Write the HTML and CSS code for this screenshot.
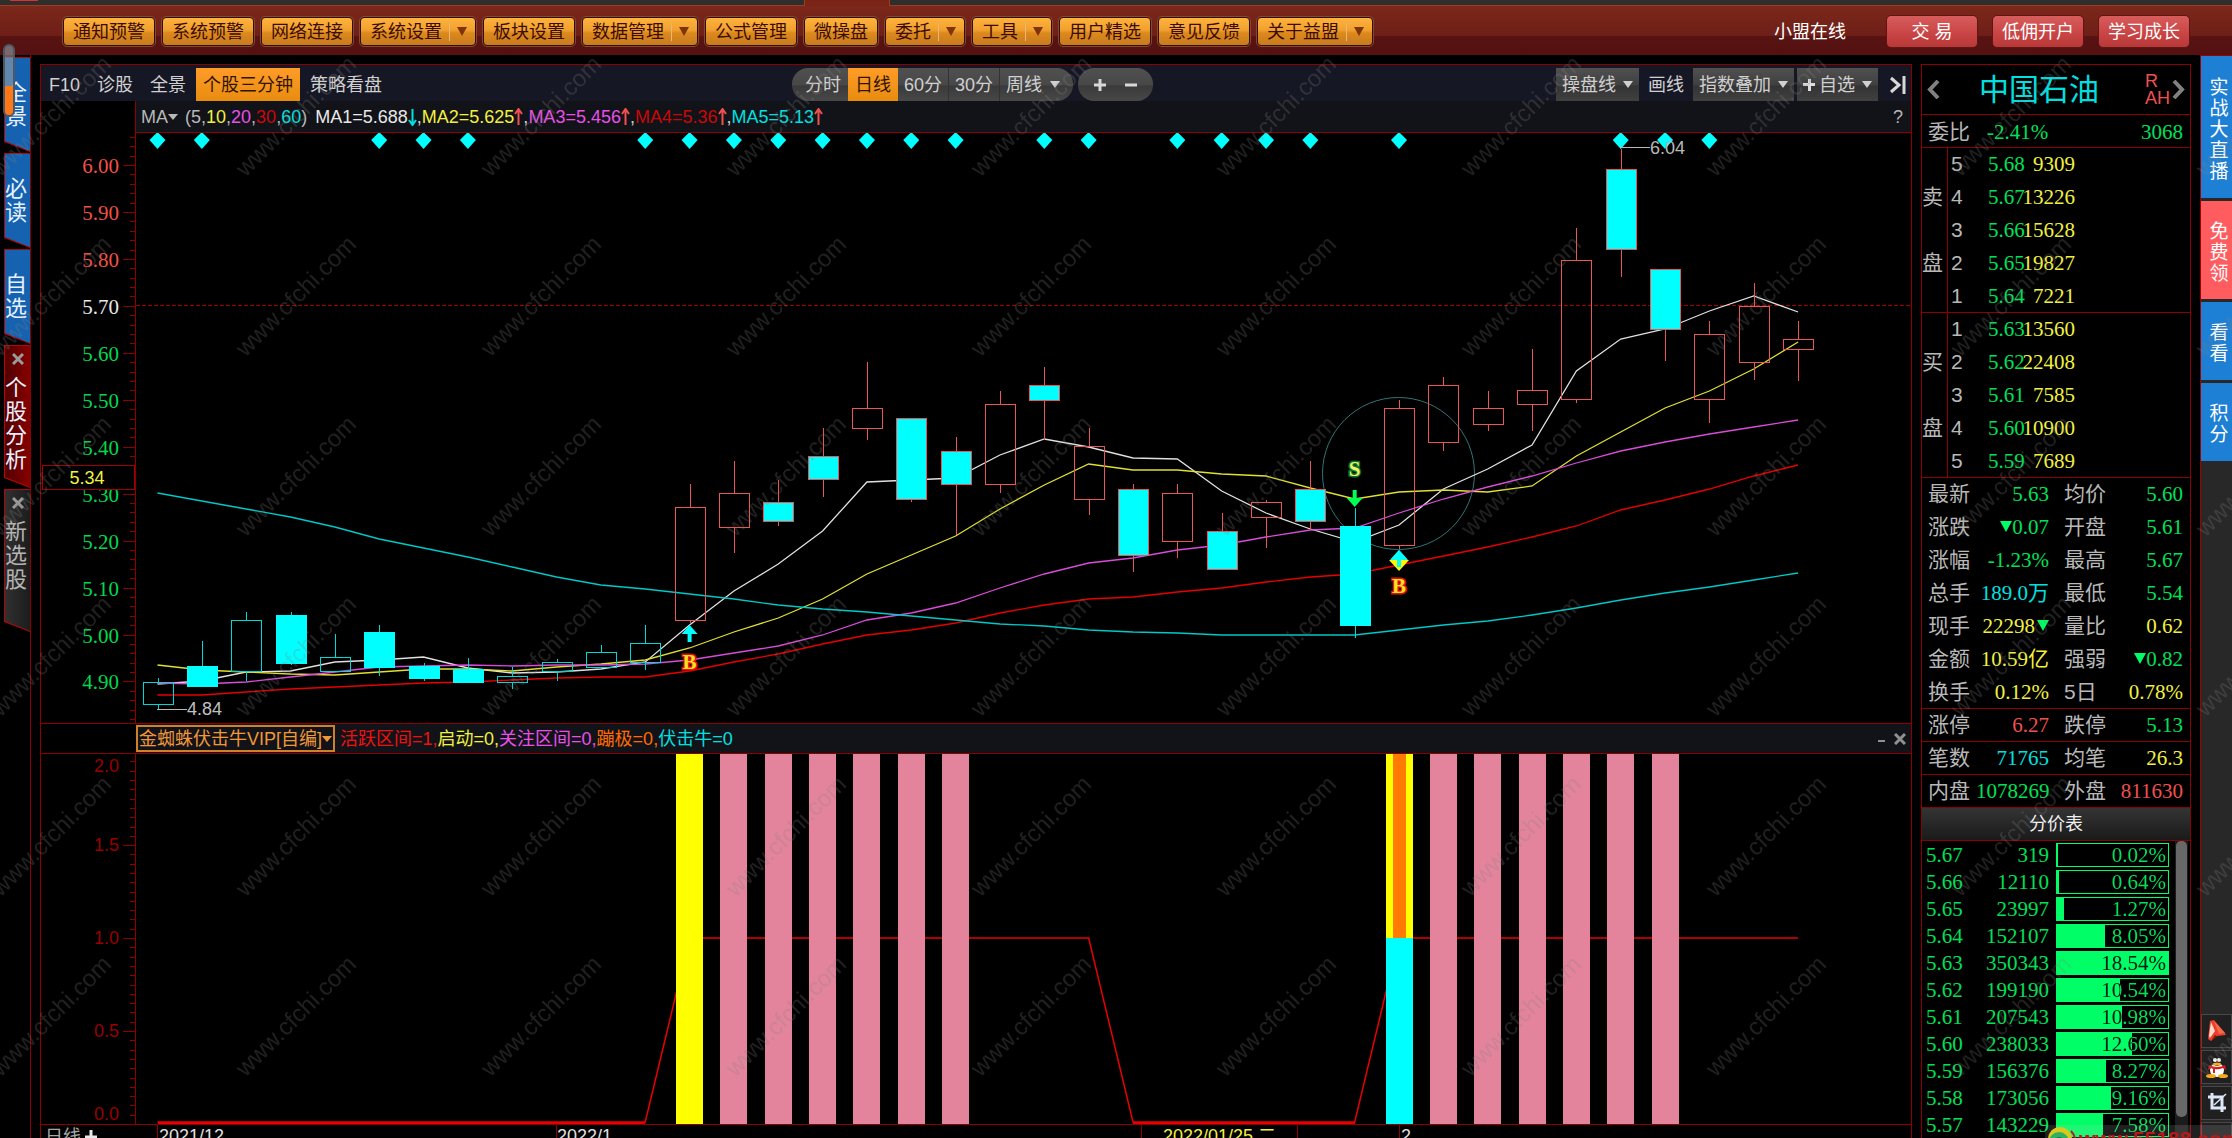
FILE: index.html
```html
<!DOCTYPE html>
<html lang="zh-CN">
<head>
<meta charset="utf-8">
<title>中国石油 - 日线</title>
<link rel="stylesheet" href="styles.css">
</head>
<body>
<div class="strip"><span class="strip-mark"></span><span class="strip-tab"></span></div>
<header class="topbar">
  <nav class="menu">
    <button class="gold">通知预警</button>
    <button class="gold">系统预警</button>
    <button class="gold">网络连接</button>
    <button class="gold">系统设置<i class="drop"></i></button>
    <button class="gold">板块设置</button>
    <button class="gold">数据管理<i class="drop"></i></button>
    <button class="gold">公式管理</button>
    <button class="gold">微操盘</button>
    <button class="gold">委托<i class="drop"></i></button>
    <button class="gold">工具<i class="drop"></i></button>
    <button class="gold">用户精选</button>
    <button class="gold">意见反馈</button>
    <button class="gold">关于益盟<i class="drop"></i></button>
  </nav>
  <div class="account">
    <a class="online" href="#">小盟在线</a>
    <button class="red">交 易</button>
    <button class="red">低佣开户</button>
    <button class="red">学习成长</button>
  </div>
</header>

<main class="desk">
  <nav class="rail">
    <button class="tab blue"><span>全景</span></button>
    <button class="tab blue"><span>必读</span></button>
    <button class="tab blue"><span>自选</span></button>
    <button class="tab wine tall"><svg class="x" viewBox="0 0 12 12"><path d="M1 1L11 11M11 1L1 11"/></svg><span>个股分析</span></button>
    <button class="tab grey tall"><svg class="x" viewBox="0 0 12 12"><path d="M1 1L11 11M11 1L1 11"/></svg><span>新选股</span></button>
    <div class="rail-scroll"></div>
  </nav>

  <section class="chart">
    <div class="toolbar">
      <div class="group">
        <button class="tool">F10</button>
        <button class="tool">诊股</button>
        <button class="tool">全景</button>
        <button class="tool on">个股三分钟</button>
        <button class="tool">策略看盘</button>
      </div>
      <div class="periods">
        <div class="pill">
          <button class="period first">分时</button>
          <button class="period on">日线</button>
          <button class="period">60分</button>
          <button class="period line">30分</button>
          <button class="period line last">周线<i class="caret"></i></button>
        </div>
        <div class="pill zoom">
          <button aria-label="放大"><svg width="14" height="14" viewBox="0 0 14 14"><path d="M7 1V13M1 7H13"/></svg></button>
          <button aria-label="缩小"><svg width="14" height="14" viewBox="0 0 14 14"><path d="M1 7H13"/></svg></button>
        </div>
      </div>
      <div class="group right">
        <button class="box">操盘线<i class="caret"></i></button>
        <button class="plain">画线</button>
        <button class="box">指数叠加<i class="caret"></i></button>
        <button class="box"><b class="plus"></b>自选<i class="caret"></i></button>
        <button class="end" aria-label="收起"><svg width="18" height="18" viewBox="0 0 18 18"><path d="M2 2L10 9L2 16M15 0V18"/></svg></button>
      </div>
    </div>
    <div class="legend">
      <button class="ma">MA<i class="caret small"></i></button>
      <span class="params">(5,<span class="yellow">10</span>,<span class="pink">20</span>,<span class="dark">30</span>,<span class="teal">60</span>)</span>
      <span class="white">MA1=5.688</span><svg class="arr down" viewBox="0 0 9 18"><path d="M4.500 1V17M1 12L4.500 17L8 12"/></svg><span class="sep">,</span>
      <span class="yellow">MA2=5.625</span><svg class="arr" viewBox="0 0 9 18"><path d="M4.500 17V1M1 6L4.500 1L8 6"/></svg><span class="sep">,</span>
      <span class="pink">MA3=5.456</span><svg class="arr" viewBox="0 0 9 18"><path d="M4.500 17V1M1 6L4.500 1L8 6"/></svg><span class="sep">,</span>
      <span class="dark">MA4=5.36</span><svg class="arr" viewBox="0 0 9 18"><path d="M4.500 17V1M1 6L4.500 1L8 6"/></svg><span class="sep">,</span>
      <span class="teal">MA5=5.13</span><svg class="arr" viewBox="0 0 9 18"><path d="M4.500 17V1M1 6L4.500 1L8 6"/></svg>
      <button class="help">?</button>
    </div>
    <div class="plot main-plot"><svg id="candles"></svg></div>
    <div class="subhead">
      <div class="subbar">
        <button class="formula">金蜘蛛伏击牛VIP[自编]<i class="caret small"></i></button>
        <span class="fvals"><span class="hot">活跃区间=1,</span><span class="yellow">启动=0,</span><span class="pink">关注区间=0,</span><span class="orange">蹦极=0,</span><span class="teal">伏击牛=0</span></span>
        <button class="win" aria-label="最小化"><svg width="8" height="12" viewBox="0 0 8 12"><path d="M0 8H7"/></svg></button>
        <button class="win thick" aria-label="关闭"><svg width="12" height="12" viewBox="0 0 12 12"><path d="M1 1L11 11M11 1L1 11"/></svg></button>
      </div>
    </div>
    <div class="plot sub-plot"><svg id="signal"></svg></div>
    <div class="dates"><svg id="dates"></svg></div>
  </section>

  <aside class="quote">
    <div class="title">
      <button aria-label="上一只"><svg width="15" height="19" viewBox="0 0 15 19"><path d="M12 1L4 9.500L12 18"/></svg></button>
      <h1>中国石油</h1>
      <span class="flags">R<br>AH</span>
      <button aria-label="下一只"><svg width="15" height="19" viewBox="0 0 15 19"><path d="M3 1L11 9.500L3 18"/></svg></button>
    </div>
    <div class="ratio"><span class="lab">委比</span><span class="num green">-2.41%</span><span class="num green end-num">3068</span></div>
    <table class="ladder">
      <tr><th></th><td class="lv">5</td><td class="p">5.68</td><td class="v">9309</td><td></td></tr>
      <tr><th>卖</th><td class="lv">4</td><td class="p">5.67</td><td class="v">13226</td><td></td></tr>
      <tr><th></th><td class="lv">3</td><td class="p">5.66</td><td class="v">15628</td><td></td></tr>
      <tr><th>盘</th><td class="lv">2</td><td class="p">5.65</td><td class="v">19827</td><td></td></tr>
      <tr><th></th><td class="lv">1</td><td class="p">5.64</td><td class="v">7221</td><td></td></tr>
    </table>
    <table class="ladder">
      <tr><th></th><td class="lv">1</td><td class="p">5.63</td><td class="v">13560</td><td></td></tr>
      <tr><th>买</th><td class="lv">2</td><td class="p">5.62</td><td class="v">22408</td><td></td></tr>
      <tr><th></th><td class="lv">3</td><td class="p">5.61</td><td class="v">7585</td><td></td></tr>
      <tr><th>盘</th><td class="lv">4</td><td class="p">5.60</td><td class="v">10900</td><td></td></tr>
      <tr><th></th><td class="lv">5</td><td class="p">5.59</td><td class="v">7689</td><td></td></tr>
    </table>
    <table class="stats">
      <tr><th>最新</th><td class="green">5.63</td><th>均价</th><td class="green">5.60</td></tr>
      <tr><th>涨跌</th><td class="green"><i class="fall"></i>0.07</td><th>开盘</th><td class="green">5.61</td></tr>
      <tr><th>涨幅</th><td class="green">-1.23%</td><th>最高</th><td class="green">5.67</td></tr>
      <tr><th>总手</th><td class="teal">189.0万</td><th>最低</th><td class="green">5.54</td></tr>
      <tr><th>现手</th><td class="yellow">22298<i class="fall after"></i></td><th>量比</th><td class="yellow">0.62</td></tr>
      <tr><th>金额</th><td class="yellow">10.59亿</td><th>强弱</th><td class="green"><i class="fall"></i>0.82</td></tr>
      <tr><th>换手</th><td class="yellow">0.12%</td><th>5日</th><td class="yellow">0.78%</td></tr>
      <tr class="rule"><th>涨停</th><td class="coral">6.27</td><th>跌停</th><td class="green">5.13</td></tr>
      <tr class="rule"><th>笔数</th><td class="teal">71765</td><th>均笔</th><td class="yellow">26.3</td></tr>
      <tr class="rule"><th>内盘</th><td class="green">1078269</td><th>外盘</th><td class="coral">811630</td></tr>
    </table>
    <button class="dist-head">分价表</button>
    <div class="dist">
      <table>
        <tr><td class="dp">5.67</td><td class="dv">319</td><td><div class="bar"><i style="width:0.1%"></i><span>0.02%</span></div></td></tr>
        <tr><td class="dp">5.66</td><td class="dv">12110</td><td><div class="bar"><i style="width:2%"></i><span>0.64%</span></div></td></tr>
        <tr><td class="dp">5.65</td><td class="dv">23997</td><td><div class="bar"><i style="width:6%"></i><span>1.27%</span></div></td></tr>
        <tr><td class="dp">5.64</td><td class="dv">152107</td><td><div class="bar"><i style="width:43%"></i><span>8.05%</span></div></td></tr>
        <tr><td class="dp">5.63</td><td class="dv">350343</td><td><div class="bar"><i style="width:100%"></i><span>18.54%</span></div></td></tr>
        <tr><td class="dp">5.62</td><td class="dv">199190</td><td><div class="bar"><i style="width:57%"></i><span>10.54%</span></div></td></tr>
        <tr><td class="dp">5.61</td><td class="dv">207543</td><td><div class="bar"><i style="width:59%"></i><span>10.98%</span></div></td></tr>
        <tr><td class="dp">5.60</td><td class="dv">238033</td><td><div class="bar"><i style="width:68%"></i><span>12.60%</span></div></td></tr>
        <tr><td class="dp">5.59</td><td class="dv">156376</td><td><div class="bar"><i style="width:44%"></i><span>8.27%</span></div></td></tr>
        <tr><td class="dp">5.58</td><td class="dv">173056</td><td><div class="bar"><i style="width:49%"></i><span>9.16%</span></div></td></tr>
        <tr><td class="dp">5.57</td><td class="dv">143229</td><td><div class="bar"><i style="width:41%"></i><span>7.58%</span></div></td></tr>
      </table>
      <div class="track"><div class="thumb"></div></div>
    </div>
  </aside>

  <nav class="side">
    <button class="promo long">实战大直播</button>
    <button class="promo hot-promo">免费领</button>
    <button class="promo">看看</button>
    <button class="promo">积分</button>
    <div class="tools">
      <button aria-label="提醒"><svg width="20" height="22" viewBox="0 0 20 22"><path d="M3 1L7 0L18 13L19 15L10 16L4 21L1 19Z" fill="#e8402a"/><path d="M4 2L8 11L3 18L2 16Z" fill="#ffd8cc"/><path d="M7 1L18 13L12 14Z" fill="#f8694c"/><path d="M4 21L8 15L10 16Z" fill="#8c1408"/></svg></button>
      <button aria-label="客服"><svg width="22" height="22" viewBox="0 0 22 22"><ellipse cx="11" cy="14" rx="7" ry="7" fill="#fff"/><circle cx="11" cy="5" r="5" fill="#1a1a1a"/><circle cx="9" cy="4" r="2" fill="#fff"/><circle cx="13" cy="4" r="2" fill="#fff"/><ellipse cx="11" cy="8" rx="4" ry="1.500" fill="#f8a81c"/><path d="M3 9Q11 13 19 9L20 14L17 12Q12 14 9 13V17H7V13L5 12L2 14Z" fill="#e01818"/><ellipse cx="5" cy="20" rx="5" ry="2" fill="#f8a81c"/><ellipse cx="17" cy="20" rx="5" ry="2" fill="#f8a81c"/></svg></button>
      <button aria-label="截图"><svg width="20" height="22" viewBox="0 0 20 22"><path d="M1 5H15V20M5 1V16H19" fill="none" stroke="#dce8f8" stroke-width="3"/><path d="M7 13L19 2" stroke="#dce8f8" stroke-width="1.500"/></svg></button>
      <button aria-label="更多"><svg width="20" height="22" viewBox="0 0 20 22"><path d="M2 20A8 8 0 0 1 18 20Z" fill="#e8402a"/></svg></button>
    </div>
  </nav>
</main>

<div class="site">
  <svg class="logo" width="34" height="26" viewBox="0 0 34 26"><circle cx="15" cy="14" r="12" fill="#d8c820"/><circle cx="14" cy="17" r="10" fill="#30b060"/><circle cx="14" cy="17" r="5" fill="#107840"/><path d="M26 6Q32 12 29 22" fill="none" stroke="#b02020" stroke-width="2"/></svg>
  <a href="#">www.55188.com</a>
</div>
<svg class="marks" aria-hidden="true">
  <defs><pattern id="tile" x="-71" y="26" width="245" height="180" patternUnits="userSpaceOnUse"><text x="122" y="98" transform="rotate(-45 122 90)" text-anchor="middle">www.cfchi.com</text></pattern></defs>
  <rect width="100%" height="100%" fill="url(#tile)"/>
</svg>
<script src="chart.js"></script>
</body>
</html>
```

FILE: styles.css
```css
* { box-sizing: border-box; }

body {
  margin: 0;
  height: 100vh;
  overflow: hidden;
  display: flex;
  flex-direction: column;
  background: #000;
  color: #d0d0d0;
  font: 18px/24px "Liberation Sans", "Noto Sans CJK SC", sans-serif;
}

button {
  font: inherit;
  color: inherit;
  background: none;
  border: 0;
  padding: 0;
  margin: 0;
  white-space: nowrap;
}

a { color: inherit; text-decoration: none; }

.white { color: #e8e8e8; }
.yellow { color: #f0f040; }
.pink { color: #e850e8; }
.dark { color: #c80808; }
.hot { color: #f01010; }
.orange { color: #ff6a00; }
.teal { color: #00e0e0; }
.green { color: #00e058; }
.coral { color: #f05050; }

/* header */
.strip { position: relative; flex: none; height: 5px; background: #2e2e2e; }
.strip-mark { position: absolute; left: 10px; top: 0; width: 28px; height: 1px; background: #e03030; }
.strip-tab { position: absolute; left: 36%; top: 0; width: 86px; height: 6px; background: #7a2418; border: solid #a03c1c; border-width: 0 1px; }

.topbar {
  flex: none;
  height: 50px;
  padding: 2px 42px 0 63px;
  display: flex;
  align-items: center;
  justify-content: space-between;
  border-top: 1px solid #a03c1c;
  background: linear-gradient(#7c281a, #6e1f18 60%, #581312 62%, #541111);
}
.menu { display: flex; gap: 7px; }
.gold {
  display: flex;
  align-items: center;
  height: 29px;
  padding: 0 9px;
  border: 1px solid #2a1208;
  border-radius: 4px;
  outline: 1px solid #8c4630;
  background: linear-gradient(#ffb23c, #f0a030 45%, #dc8a1c 55%, #c87a20);
  color: #3c0c04;
}
.drop { display: flex; align-items: center; margin-left: 7px; height: 18px; padding-left: 7px; border-left: 1px solid #e8b878; }
.drop::after { content: ""; border: solid transparent; border-width: 9px 5px 0; margin-right: -1px; border-top-color: #80340c; }
.account { display: flex; align-items: center; gap: 14px; color: #fff; }
.online { margin-right: 26px; }
.red {
  width: 92px;
  height: 33px;
  border: 1px solid #601414;
  border-radius: 5px;
  background: linear-gradient(#d85c5c, #c84444 60%, #b83838);
}

/* workspace */
.desk { flex: 1; min-height: 0; display: flex; gap: 9px; }

.rail {
  position: relative;
  flex: none;
  width: 31px;
  padding: 2px 0 0 4px;
  display: flex;
  flex-direction: column;
  gap: 1px;
  border-right: 1px solid #8c0000;
}
.tab {
  flex: none;
  position: relative;
  height: 95px;
  display: flex;
  flex-direction: column;
  align-items: center;
  justify-content: center;
  padding-right: 2px;
  background: #b00808;
  color: #e8f0ff;
  font-size: 22px;
  line-height: 24px;
  clip-path: polygon(0 0, 100% 0, 100% 100%, 0 calc(100% - 10px));
}
.tab::before {
  content: "";
  position: absolute;
  inset: 1px 0 1px 1px;
  clip-path: polygon(0 0, 100% 0, 100% 100%, 0 calc(100% - 10px));
}
.tab span { position: relative; width: 22px; white-space: normal; }
.blue::before { background: #1462b0; }
.wine::before { background: linear-gradient(90deg, #500000, #880000); }
.grey::before { background: linear-gradient(90deg, #303030, #1c1c1c); }
.grey { color: #b4b4b4; }
.tall { height: 143px; justify-content: flex-start; padding-top: 8px; }
.x { position: relative; width: 12px; height: 12px; margin: 0 0 11px 4px; stroke: #9a9a9a; stroke-width: 3; }
.rail-scroll {
  position: absolute;
  left: 3px;
  top: -11px;
  width: 12px;
  height: 73px;
  border: 2px solid #4c5864;
  border-radius: 6px;
  background: linear-gradient(rgba(150, 160, 170, .6) 58%, #ff7818 58%);
}

/* chart panel */
.chart {
  flex: 1;
  min-width: 0;
  margin-top: 9px;
  display: flex;
  flex-direction: column;
  border: solid #8c0000;
  border-width: 1px 1px 0;
}
.toolbar {
  flex: none;
  height: 36px;
  padding: 3px 4px 0 1px;
  display: grid;
  grid-template-columns: 1fr auto 1fr;
  background: #161724;
}
.group { display: flex; gap: 3px; }
.tool { padding: 0 7px; }
.on, .pill .on { background: linear-gradient(#ff9c28, #e88c10); color: #301400; }
.periods { display: flex; gap: 5px; margin-right: 4px; }
.pill { display: flex; overflow: hidden; border-radius: 16px; background: linear-gradient(#505050, #484848 50%, #3a3a3a 55%, #484848); }
.period { padding: 0 6px; }
.period.first { padding: 0 7px 0 13px; }
.period.on { padding: 0 7px; }
.period.line { border-left: 1px solid #333; }
.period.last { padding-right: 13px; display: flex; align-items: center; gap: 8px; }
.zoom { width: 75px; justify-content: center; gap: 17px; stroke: #d8d8d8; stroke-width: 3; }
.zoom button { display: flex; align-items: center; }
.caret { display: inline-block; border: solid transparent; border-width: 7px 5px 0; border-top-color: currentColor; }
.caret.small { border-width: 6px 5px 0; }
.right { justify-content: flex-end; }
.box { display: flex; align-items: center; gap: 7px; padding: 0 6px; background: linear-gradient(#505050, #404040 50%, #343434 55%, #404040); }
.plain { padding: 0 6px; }
.plus { width: 12px; height: 12px; margin-right: -3px; background: linear-gradient(#ddd, #ddd) center / 12px 3px no-repeat, linear-gradient(#ddd, #ddd) center / 3px 12px no-repeat; }
.end { display: flex; align-items: center; margin-left: 8px; fill: none; stroke: #d8d8d8; stroke-width: 3; }

.legend {
  flex: none;
  height: 32px;
  margin-left: 94px;
  padding: 0 8px 0 5px;
  display: flex;
  align-items: center;
  border: solid #8c0000;
  border-width: 0 0 1px 1px;
  background: #121318;
}
.ma { display: flex; align-items: center; color: #b8b8b8; }
.params { margin: 0 8px 0 7px; color: #b8b8b8; }
.arr { flex: none; width: 9px; height: 18px; fill: none; stroke: #f05050; stroke-width: 2; }
.arr.down { stroke: #00e0e0; }
.help { margin-left: auto; color: #b8b8b8; }

.plot { position: relative; min-height: 0; overflow: hidden; }
.main-plot { flex: 590 1 0; }
.sub-plot { flex: 370 1 0; }
.plot svg, .dates svg { display: block; width: 100%; height: 100%; }
.subhead { flex: none; height: 31px; padding-left: 95px; border: solid #8c0000; border-width: 1px 0; }
.subbar { height: 29px; padding: 1px 5px 1px 0; display: flex; align-items: center; gap: 8px; background: #121318; }
.formula { display: flex; align-items: center; height: 27px; padding: 0 1px; border: 2px solid #d08028; color: #f09838; }
.fvals { flex: 1; margin-left: -3px; }
.win { display: flex; stroke: #909090; stroke-width: 2; }
.win.thick { stroke-width: 3; }
.dates { flex: none; height: 14px; border-top: 1px solid #8c0000; overflow: hidden; }

svg text { font-family: "Liberation Sans", "Noto Sans CJK SC", sans-serif; font-size: 18px; }
svg .price { font-family: "Liberation Serif", serif; font-size: 21px; text-anchor: end; }
svg .signal { font-family: "Liberation Serif", serif; font-size: 21px; font-weight: bold; text-anchor: middle; paint-order: stroke; stroke-width: 3px; }
svg .crisp { shape-rendering: crispEdges; }

/* quote panel */
.quote {
  flex: none;
  width: 270px;
  margin-top: 9px;
  border: solid #8c0000;
  border-width: 1px 1px 0;
  display: flex;
  flex-direction: column;
  font-size: 21px;
  line-height: 32px;
  color: #b8b8b8;
}
.title { flex: none; height: 49px; padding: 0 4px; display: flex; align-items: center; fill: none; stroke: #808080; stroke-width: 4; }
.title button { display: flex; }
.title h1 { flex: 1; margin: 0; text-align: center; font-size: 30px; font-weight: 400; color: #00e0e0; }
.flags { width: 26px; margin-left: 8px; font-size: 18px; line-height: 17px; color: #f05050; }
.ratio { flex: none; height: 33px; padding: 1px 7px 0 6px; display: flex; border-top: 1px solid #8c0000; }
.num, .ladder .p, .ladder .v, .stats td, .dist { font-family: "Liberation Serif", "Noto Sans CJK SC", serif; }
.ratio .green { margin-left: 17px; }
.ratio .end-num { margin-left: auto; }
table { border-collapse: collapse; table-layout: fixed; width: 100%; }
th { font-weight: 400; text-align: left; }
td, th { padding: 0; white-space: nowrap; vertical-align: middle; }
.ladder, .stats { flex: none; border-top: 1px solid #8c0000; border-collapse: separate; border-spacing: 0; }
.ladder td, .ladder th, .stats td, .stats th { height: 33px; line-height: 28px; }
.ladder tr:first-child td, .ladder tr:first-child th { height: 32px; }
.ladder th { width: 26px; border-right: 1px solid #8c0000; }
.ladder .lv { width: 39px; padding-left: 3px; }
.ladder .p { width: 35px; padding-left: 1px; color: #00e058; }
.ladder .v { width: 53px; text-align: right; color: #f0f040; }
.stats th { width: 54px; padding-left: 6px; }
.stats tr:first-child th, .stats tr:first-child td { height: 32px; }
.stats td { text-align: right; }
.stats td:nth-child(2) { width: 73px; }
.stats td:last-child { padding-right: 7px; }
.stats th:nth-child(3) { width: 68px; padding-left: 15px; }
.stats .rule th, .stats .rule td { border-top: 1px solid #8c0000; }
.fall { display: inline-block; border: solid transparent; border-width: 11px 6px 0; border-top-color: #00ff66; vertical-align: 2px; }
.fall.after { margin-left: 2px; }
.dist-head { flex: none; height: 34px; border: solid #8c0000; border-width: 1px 0; background: linear-gradient(#343434, #1a1a1a); color: #f0f0f0; font-size: 18px; line-height: 28px; }
.dist { flex: 1; min-height: 0; overflow: hidden; display: flex; gap: 6px; padding: 0 2px 0 4px; color: #00e058; }
.dist table { flex: 1; align-self: flex-start; }
.dist td { height: 27px; line-height: 24px; }
.dp { width: 40px; }
.dv { width: 83px; text-align: right; }
.dist td:last-child { padding-left: 7px; }
.bar { position: relative; height: 24px; line-height: 22px; border: 1px solid #00ff66; background: #000; isolation: isolate; text-align: right; padding-right: 2px; }
.bar i { position: absolute; left: 0; top: 0; height: 100%; background: #00ff66; }
.bar span { position: relative; mix-blend-mode: difference; }
.track { width: 13px; background: #1c1c1c; }
.thumb { width: 11px; height: 276px; margin-left: 1px; border-radius: 5px; background: #686868; }

/* right rail */
.side { flex: none; width: 32px; display: flex; flex-direction: column; gap: 3px; background: #282828; border-left: 1px solid #a00000; }
.promo { flex: none; height: 78px; padding: 4px 3px 0 8px; background: #1e80d4; color: #fff; font-size: 19px; line-height: 21px; white-space: normal; }
.long { height: 143px; border-top: 1px solid #a00000; }
.hot-promo { height: 98px; background: #ff5c60; }
.tools { margin-top: auto; height: 124px; display: flex; flex-direction: column; gap: 2px; overflow: hidden; }
.tools button { flex: none; height: 34px; display: flex; align-items: center; justify-content: center; border: 1px solid #484848; background: #202020; }

/* overlays */
.site { position: fixed; right: 0; bottom: 0; width: 187px; height: 13px; overflow: hidden; display: flex; background: rgba(200, 200, 200, .16); }
.logo { flex: none; }
.site a { color: #b81818; font-weight: bold; font-size: 21px; line-height: 28px; }
.marks { position: fixed; inset: 0; width: 100%; height: 100%; pointer-events: none; }
.marks text { font-size: 24px; fill: rgba(128, 128, 128, .25); }
```

FILE: chart.js
```js
// Chart space: x 136-1911, candles y 133-723, signal y 754-1124.
const X0 = 157.5, STEP = 44.34, AXIS = 95;
const RED = '#8c0000', CYAN = '#00ffff', CORAL = '#e85656';

// [high, top, bottom, low, filled, colour]
const candles = [
  [678,682,704,709,0,1],[641,666,686,686,1,1],[612,620,671,681,0,1],[612,615,663,665,1,1],
  [634,657,671,671,0,1],[625,632,667,676,1,1],[663,666,678,681,1,1],[658,669,682,682,1,1],
  [667,676,682,689,0,1],[659,662,671,681,0,1],[645,652,667,670,0,1],[625,643,662,670,0,1],
  [484,507,620,623,0,0],[461,493,527,553,0,0],[480,502,521,526,1,0],[428,456,479,497,1,0],
  [362,408,428,440,0,0],[418,418,499,502,1,0],[437,451,484,535,1,0],[391,404,484,493,0,0],
  [367,385,400,440,1,0],[428,446,499,515,0,0],[484,489,555,572,1,0],[484,493,541,558,0,0],
  [513,531,569,569,1,0],[500,502,517,548,0,0],[461,489,521,530,1,0],[508,526,625,638,1,1],
  [400,408,545,549,0,0],[377,385,442,451,0,0],[391,408,424,431,0,0],[349,390,404,431,0,0],
  [228,260,399,403,0,0],[149,169,249,277,1,0],[269,269,329,361,1,0],[321,334,399,423,0,0],
  [283,306,362,380,0,0],[321,339,349,381,0,0]
];
const averages = {
  '#e0e0e0': [684,681,672,671,662,660,657,668,673,672,669,662,625,591,564,531,482,480,478,455,439,447,458,459,491,513,529,542,525,489,469,445,371,339,329,311,296,312],
  '#e0e030': [665,670,672,674,675,672,669,669,671,667,664,660,648,632,618,599,574,555,536,509,485,464,470,470,474,476,488,499,492,490,492,486,456,432,408,391,369,342],
  '#d84cd8': [683,684,682,677,672,667,666,665,666,665,665,664,660,653,646,635,620,613,603,588,574,563,558,550,545,537,530,528,513,499,487,476,463,451,442,434,427,420],
  '#e80000': [695,695,692,689,687,685,683,682,680,678,677,677,671,662,654,644,635,630,623,613,605,599,597,592,588,582,577,574,565,556,547,537,526,510,500,489,476,465],
  '#00c8c8': [493,501,509,517,527,539,548,557,567,577,585,589,594,599,605,609,612,616,620,624,626,630,632,633,635,635,635,635,630,625,621,615,608,600,593,587,580,573]
};
const diamonds = [0,1,5,6,7,11,12,13,14,15,16,17,18,20,21,23,24,25,26,28,33,34,35];

const at = i => X0 + STEP * i;
const line = (x1, y1, x2, y2, c, w = 1, extra = '') =>
  `<line class="crisp" x1="${x1}" y1="${y1}" x2="${x2}" y2="${y2}" stroke="${c}" stroke-width="${w}" ${extra}/>`;
const label = (x, y, t, c, cls = '', extra = '') => `<text class="${cls}" x="${x}" y="${y}" fill="${c}" ${extra}>${t}</text>`;
const poly = (pts, c) => `<polygon points="${pts.map(p => p.join()).join(' ')}" fill="${c}"/>`;

function scales(svg, top, height) {
  const w = svg.clientWidth, h = svg.clientHeight;
  return { w, h, sx: x => AXIS + (x - 136) * (w - AXIS) / 1775, sy: y => (y - top) * h / height };
}

function arrow(x, y, dir, c) {
  return poly([[x, y], [x + 8, y + 9 * dir], [x + 2, y + 9 * dir], [x + 2, y + 17 * dir],
    [x - 2, y + 17 * dir], [x - 2, y + 9 * dir], [x - 8, y + 9 * dir]], c);
}

function drawCandles() {
  const svg = document.getElementById('candles');
  const { w, sx, sy } = scales(svg, 133, 590);
  const py = p => sy(165 + (6 - p) * 469.5);
  let s = line(94.5, 0, 94.5, sy(723), RED);
  for (let c = 606; c >= 482; c -= 2) {
    const y = Math.round(py(c / 100)), major = c % 10 === 0;
    s += line(major ? 82 : 89, y, 94, y, RED);
    if (major) s += label(78, y + 8, (c / 100).toFixed(2), c > 570 ? '#f05048' : c === 570 ? '#e8e8e8' : '#00d850', 'price');
  }
  s += `<rect class="crisp" x="1" y="${sy(465)}" width="92" height="24" fill="#000" stroke="#a00000"/>`;
  s += label(46, sy(477) + 7, '5.34', '#f0f040', '', 'text-anchor="middle"');
  s += line(95, py(5.7), w, py(5.7), '#a00000', 1, 'stroke-dasharray="4 2"');
  s += `<circle cx="${sx(1398.5)}" cy="${sy(473.5)}" r="76" fill="none" stroke="#347474"/>`;
  for (const [c, ys] of Object.entries(averages))
    s += `<polyline fill="none" stroke="${c}" stroke-width="1.3" points="${ys.map((y, i) => sx(at(i)) + ',' + sy(y)).join(' ')}"/>`;
  for (const i of diamonds) {
    const x = sx(at(i)), y = 7;
    s += poly([[x, y - 8], [x + 8, y], [x, y + 9], [x - 8, y]], CYAN);
  }
  candles.forEach(([hi, top, bot, lo, full, cold], i) => {
    const x = Math.round(sx(at(i))), c = cold ? '#00d8d8' : CORAL;
    s += line(x, sy(hi), x, sy(top), c) + line(x, sy(bot), x, sy(lo), c);
    s += `<rect class="crisp" x="${x - 15}" y="${Math.round(sy(top))}" width="30" height="${Math.round(sy(bot) - sy(top))}" fill="${full ? CYAN : 'none'}" stroke="${full && cold ? CYAN : c}"/>`;
  });
  s += line(sx(1620), sy(147), sx(1620) + 30, sy(147), '#b8b8b8') + label(sx(1620) + 30, sy(147) + 7, '6.04', '#b8b8b8');
  s += line(sx(157), sy(709), sx(157) + 30, sy(709), '#b8b8b8') + label(sx(157) + 30, sy(709) + 6, '4.84', '#c0c0c0');
  s += arrow(sx(at(12)), sy(625), 1, CYAN);
  s += label(sx(at(12)), sy(669), 'B', '#ffe020', 'signal', 'stroke="#e01010"');
  s += label(sx(at(27)), sy(476), 'S', '#f0f060', 'signal', 'stroke="#087830"');
  s += arrow(sx(at(27)), sy(507), -1, '#00ff50');
  const bx = sx(at(28));
  s += poly([[bx - 10, sy(560)], [bx + 10, sy(560)], [bx, sy(571)]], '#ffff00') + arrow(bx, sy(550), 1, CYAN);
  s += poly([[bx - 9, sy(560)], [bx + 9, sy(560)], [bx, sy(550)]], CYAN);
  s += label(bx, sy(593), 'B', '#ffe020', 'signal', 'stroke="#e01010"');
  svg.innerHTML = s;
}

function drawSignal() {
  const svg = document.getElementById('signal');
  const { h, sx, sy } = scales(svg, 754, 370);
  let s = line(94.5, 0, 94.5, h, RED);
  for (let k = 0; k < 40; k++) {
    const y = Math.round(h - k * h / 39.8);
    s += line(k % 10 === 0 && k ? 82 : 89, y, 94, y, RED);
  }
  [['2.0', 766], ['1.5', 845], ['1.0', 938], ['0.5', 1031], ['0.0', 1114]].forEach(([t, y]) => {
    s += label(78, sy(y) + 6, t, '#980000', '', 'text-anchor="end"');
  });
  const path = [[0, 1122], [11, 1122], [12, 938], [21, 938], [22, 1122], [27, 1122], [28, 938], [37, 938]];
  s += `<polyline fill="none" stroke="#e80000" stroke-width="1.5" points="${path.map(([i, y]) => sx(at(i)) + ',' + sy(y)).join(' ')}"/>`;
  s += line(sx(at(0)), sy(1123), sx(at(11)), sy(1123), '#e80000', 2) + line(sx(at(22)), sy(1123), sx(at(27)), sy(1123), '#e80000', 2);
  const bar = (i, y1, y2, c, w = 27) =>
    `<rect class="crisp" x="${Math.round(sx(at(i)) - w / 2)}" y="${sy(y1)}" width="${w}" height="${sy(y2) - sy(y1)}" fill="${c}"/>`;
  s += bar(12, 754, 1124, '#ffff00');
  for (const i of [13, 14, 15, 16, 17, 18, 29, 30, 31, 32, 33, 34]) s += bar(i, 754, 1124, '#e4849c');
  s += bar(28, 754, 938, '#ffff00') + bar(28, 754, 938, '#ff7a00', 13) + bar(28, 938, 1124, CYAN);
  svg.innerHTML = s;
}

function drawDates() {
  const svg = document.getElementById('dates');
  const { sx } = scales(svg, 1125, 13);
  let s = label(4, 18, '日线', '#a8a8a8') + `<path d="M50 5V18M44 12H56" stroke="#e8e8e8" stroke-width="3"/>`;
  for (const x of [157, 556, 1141, 1297, 1399]) s += line(sx(x), 0, sx(x), 13, RED);
  s += label(sx(159), 17, '2021/12', '#e0e0e0') + label(sx(557), 17, '2022/1', '#e0e0e0');
  s += label(sx(1163), 17, '2022/01/25 二', '#f0f040') + label(sx(1401), 17, '2', '#e0e0e0');
  svg.innerHTML = s;
}

function draw() { drawCandles(); drawSignal(); drawDates(); }
window.addEventListener('resize', draw);
draw();
```
